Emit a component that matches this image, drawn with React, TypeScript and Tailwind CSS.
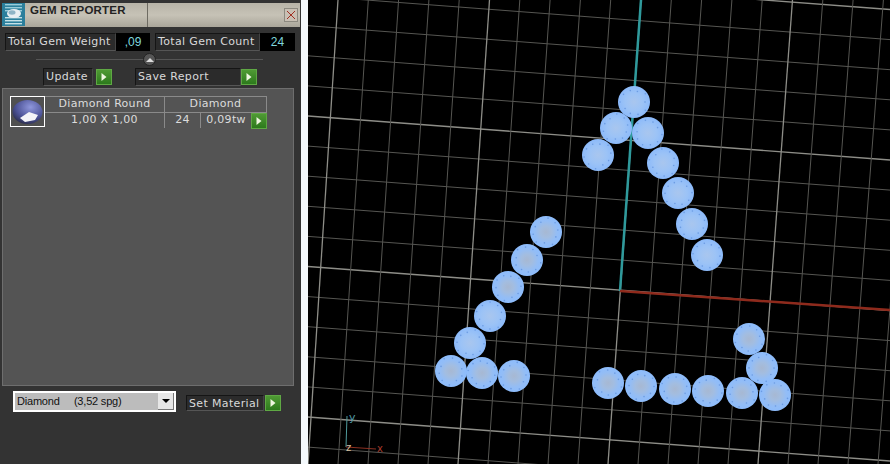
import React from 'react';

const uiFont = "font-['DejaVu_Sans',sans-serif]";

const gems = [
  { x: 634, y: 102, c: 'a' }, { x: 616, y: 128, c: 'a' }, { x: 648, y: 133, c: 'a' }, { x: 598, y: 155, c: 'a' },
  { x: 663, y: 163, c: 'a' }, { x: 678, y: 193, c: 'a' }, { x: 692, y: 224, c: 'a' }, { x: 707, y: 255, c: 'a' },
  { x: 546, y: 232, c: 'b' }, { x: 527, y: 260, c: 'b' }, { x: 508, y: 287, c: 'b' }, { x: 490, y: 316, c: 'a' },
  { x: 470, y: 343, c: 'a' }, { x: 451, y: 371, c: 'b' }, { x: 482, y: 373, c: 'b' }, { x: 514, y: 376, c: 'b' },
  { x: 608, y: 383, c: 'b' }, { x: 641, y: 386, c: 'b' }, { x: 675, y: 389, c: 'b' }, { x: 708, y: 391, c: 'b' },
  { x: 742, y: 393, c: 'b' }, { x: 775, y: 395, c: 'b' }, { x: 762, y: 368, c: 'b' }, { x: 749, y: 339, c: 'b' },
];

const GoButton = () => (
  <button className="w-[16px] h-[16px] shrink-0 bg-gradient-to-b from-[#4f9a34] to-[#2c7a1c] border border-[#5fa844] flex items-center justify-center">
    <svg width="8" height="10" viewBox="0 0 8 10">
      <path d="M1.5 1 L6.5 5 L1.5 9 Z" fill="#eef6e0" />
    </svg>
  </button>
);

const LabelBox = ({ text, className }: { text: string; className: string }) => (
  <div className={`whitespace-nowrap bg-[#2b2b2b] border-t border-l border-[#151515] border-b border-b-[#555] border-r border-r-[#444] text-[#d9d9d9] text-[11px] leading-[16px] tracking-[0.35px] pl-[2px] ${className}`}>
    {text}
  </div>
);

const ValueBox = ({ text, className }: { text: string; className: string }) => (
  <div className={`h-[18px] bg-black text-[#7fd6dc] text-[12px] leading-[18px] text-center font-['Liberation_Sans',sans-serif] ${className}`}>{text}</div>
);

const GemIcon = () => (
  <svg width="33" height="29" viewBox="0 0 33 29" className="block">
    <defs>
      <radialGradient id="thumb" cx="0.6" cy="0.3" r="0.8">
        <stop offset="0" stopColor="#8f97dc" />
        <stop offset="0.6" stopColor="#4c5296" />
        <stop offset="1" stopColor="#24263f" />
      </radialGradient>
    </defs>
    <rect width="33" height="29" fill="#505050" />
    <ellipse cx="16.5" cy="15" rx="15" ry="12" fill="url(#thumb)" />
    <path d="M9 21 L18 15 L27 18 L24 23 L14 25 Z" fill="#f4f4f8" />
  </svg>
);

const AppIcon = () => (
  <svg width="23" height="23" viewBox="0 0 23 23" className="block shrink-0">
    <rect width="23" height="23" fill="#2b7f9c" />
    {[1, 4, 7].map((y) => (
      <g key={y}>
        <rect x="3" y={y} width="17" height="1.4" fill="#bfe6ef" opacity="0.75" />
        <rect x="3" y={y + 13} width="17" height="1.4" fill="#dff2f5" opacity="0.85" />
      </g>
    ))}
    <ellipse cx="12" cy="10.5" rx="7" ry="4.5" fill="#e8eef2" />
    <ellipse cx="10" cy="9.5" rx="3.5" ry="2.2" fill="#8fb4c6" />
  </svg>
);

const Viewport = () => {
  // grid lines, measured from the two edges of the view
  const verticals = Array.from({ length: 21 }, (_, i) => i);
  const horizontals = Array.from({ length: 17 }, (_, j) => j - 5);
  return (
    <svg width="582" height="464" viewBox="308 0 582 464" className="block bg-black">
      <defs>
        <radialGradient id="gemA">
          <stop offset="0" stopColor="#a9c6ee" />
          <stop offset="0.55" stopColor="#9cc3f6" />
          <stop offset="1" stopColor="#8cbafa" />
        </radialGradient>
        <radialGradient id="gemB">
          <stop offset="0" stopColor="#a7b8d2" />
          <stop offset="0.35" stopColor="#a3bde0" />
          <stop offset="0.7" stopColor="#93bdf6" />
          <stop offset="1" stopColor="#8dbcfc" />
        </radialGradient>
      </defs>
      {horizontals.map((j) => (
        <line
          key={j}
          x1="308"
          y1={116 + 30.1 * j}
          x2="890"
          y2={160 + 30.1 * j}
          stroke={j % 5 === 0 ? '#8e8e88' : '#565652'}
          strokeWidth={j % 5 === 0 ? 1.3 : 1}
        />
      ))}
      {verticals.map((i) => (
        <line
          key={i}
          x1={338 + 30.3 * i}
          y1="0"
          x2={308 + 30 * i}
          y2="464"
          stroke={i % 5 === 0 ? '#8e8e88' : '#565652'}
          strokeWidth={i % 5 === 0 ? 1.3 : 1}
        />
      ))}
      <line x1="641" y1="0" x2="620" y2="291" stroke="#2f9a9c" strokeWidth="2.5" />
      <line x1="620" y1="291" x2="890" y2="310" stroke="#8f2a1c" strokeWidth="2.5" />

      {gems.map((g, n) => (
        <g key={n}>
          <circle cx={g.x} cy={g.y} r="16" fill={g.c === 'a' ? 'url(#gemA)' : 'url(#gemB)'} />
          {Array.from({ length: 10 }, (_, k) => {
            const a = (k / 10) * Math.PI * 2 + n;
            const r = 11 + ((k * 7 + n) % 4);
            return (
              <circle
                key={k}
                cx={g.x + Math.cos(a) * r}
                cy={g.y + Math.sin(a) * r}
                r="0.8"
                fill="#5f90dc"
                opacity="0.75"
              />
            );
          })}
        </g>
      ))}

      <line x1="346" y1="447" x2="347" y2="416" stroke="#4f9a9c" strokeWidth="1" />
      <line x1="346" y1="447" x2="376" y2="449" stroke="#8a3022" strokeWidth="1" />
      <text x="349" y="421" fontSize="11" fill="#4f9aa6" fontFamily="'DejaVu Sans', sans-serif">y</text>
      <text x="346" y="451" fontSize="10" fill="#d8c0a0" fontFamily="'DejaVu Sans', sans-serif">z</text>
      <text x="377" y="452" fontSize="10" fill="#a83a2c" fontFamily="'DejaVu Sans', sans-serif">x</text>
    </svg>
  );
};

export default function App() {
  return (
    <div className={`w-[890px] h-[464px] flex overflow-hidden bg-white ${uiFont}`}>
      <aside className="w-[301px] shrink-0 bg-[#333333] flex flex-col">
        <div className="h-[28px] pt-[3px] flex">
          <div className="flex-1 flex items-stretch bg-gradient-to-b from-[#b8b4a8] via-[#c6c2b6] to-[#aaa69a] ml-[2px] mr-[1px] h-[24px]">
            <AppIcon />
            <div className="w-[122px] pl-[5px] pt-px text-[11.5px] leading-[13px] font-bold text-[#222] font-['Liberation_Sans',sans-serif] tracking-[0.2px] whitespace-nowrap">
              GEM REPORTER
            </div>
            <div className="w-px bg-[#6e6b62]" />
            <div className="flex-1 flex items-center justify-end pr-[2px]">
              <div className="w-[14px] h-[14px] border border-[#8d8a80] bg-[#c9c0b4] flex items-center justify-center">
                <svg width="10" height="10" viewBox="0 0 10 10">
                  <path d="M1 1 L9 9 M9 1 L1 9" stroke="#a02f22" strokeWidth="1" />
                </svg>
              </div>
            </div>
          </div>
        </div>

        <div className="flex items-center mt-[5px] pl-[5px]">
          <LabelBox text="Total Gem Weight" className="h-[18px] w-[111px]" />
          <ValueBox text=",09" className="w-[34px]" />
          <LabelBox text="Total Gem Count" className="h-[18px] w-[105px] ml-[5px]" />
          <ValueBox text="24" className="w-[35px]" />
        </div>

        <div className="relative h-[17px] mx-[36px] flex items-center">
          <div className="w-[227px] h-px bg-[#111] border-b border-[#555]" />
          <div className="absolute left-[107px] top-[2px] w-[13px] h-[13px] rounded-full bg-[#555] border border-[#222] flex items-center justify-center">
            <div className="w-0 h-0 border-x-[4px] border-x-transparent border-b-[4px] border-b-[#ddd]" />
          </div>
        </div>

        <div className="flex items-center h-[18px] pl-[43px]">
          <LabelBox text="Update" className="h-[18px] w-[50px]" />
          <div className="ml-[3px]">
            <GoButton />
          </div>
          <LabelBox text="Save Report" className="h-[18px] w-[106px] ml-[23px]" />
          <GoButton />
        </div>

        <div className="mt-[2px] ml-[2px] w-[292px] h-[298px] bg-[#545454] border border-[#6e6e6e] pl-[7px] pt-[7px]">
          <div className="flex">
            <div className="w-[35px] h-[31px] border border-white">
              <GemIcon />
            </div>
            <div className="w-[222px] text-[#dcdcdc] text-[11px] leading-[14px] tracking-[0.3px]">
              <div className="flex h-[16px] border-t border-[#8a8a8a]">
                <div className="w-[120px] text-center border-r border-[#8a8a8a]">Diamond Round</div>
                <div className="w-[102px] text-center border-r border-[#8a8a8a]">Diamond</div>
              </div>
              <div className="flex h-[16px] border-t border-[#8a8a8a]">
                <div className="w-[120px] text-center border-r border-[#8a8a8a]">1,00 X 1,00</div>
                <div className="w-[36px] text-center border-r border-[#8a8a8a]">24</div>
                <div className="w-[50px] text-center">0,09tw</div>
                <GoButton />
              </div>
            </div>
          </div>
        </div>

        <div className="flex items-center mt-[5px] pl-[13px]">
          <div className="w-[163px] h-[21px] border-2 border-white bg-[#bcbcbc] flex items-center justify-between text-[11px] tracking-[-0.2px] text-[#111] font-['Liberation_Sans',sans-serif]">
            <span className="pl-[2px] whitespace-pre">Diamond     (3,52 spg)</span>
            <div className="w-[16px] h-[17px] bg-[#e6e6e6] border-r border-b border-[#777] flex items-center justify-center">
              <div className="w-0 h-0 border-x-[4px] border-x-transparent border-t-[4px] border-t-black" />
            </div>
          </div>
          <LabelBox text="Set Material" className="h-[16px] leading-[15px] mt-[3px] w-[78px] ml-[10px]" />
          <div className="ml-[1px] mt-[3px]">
            <GoButton />
          </div>
        </div>
      </aside>

      <div className="w-[7px] shrink-0 bg-[#f4f9fc]" />
      <Viewport />
    </div>
  );
}
